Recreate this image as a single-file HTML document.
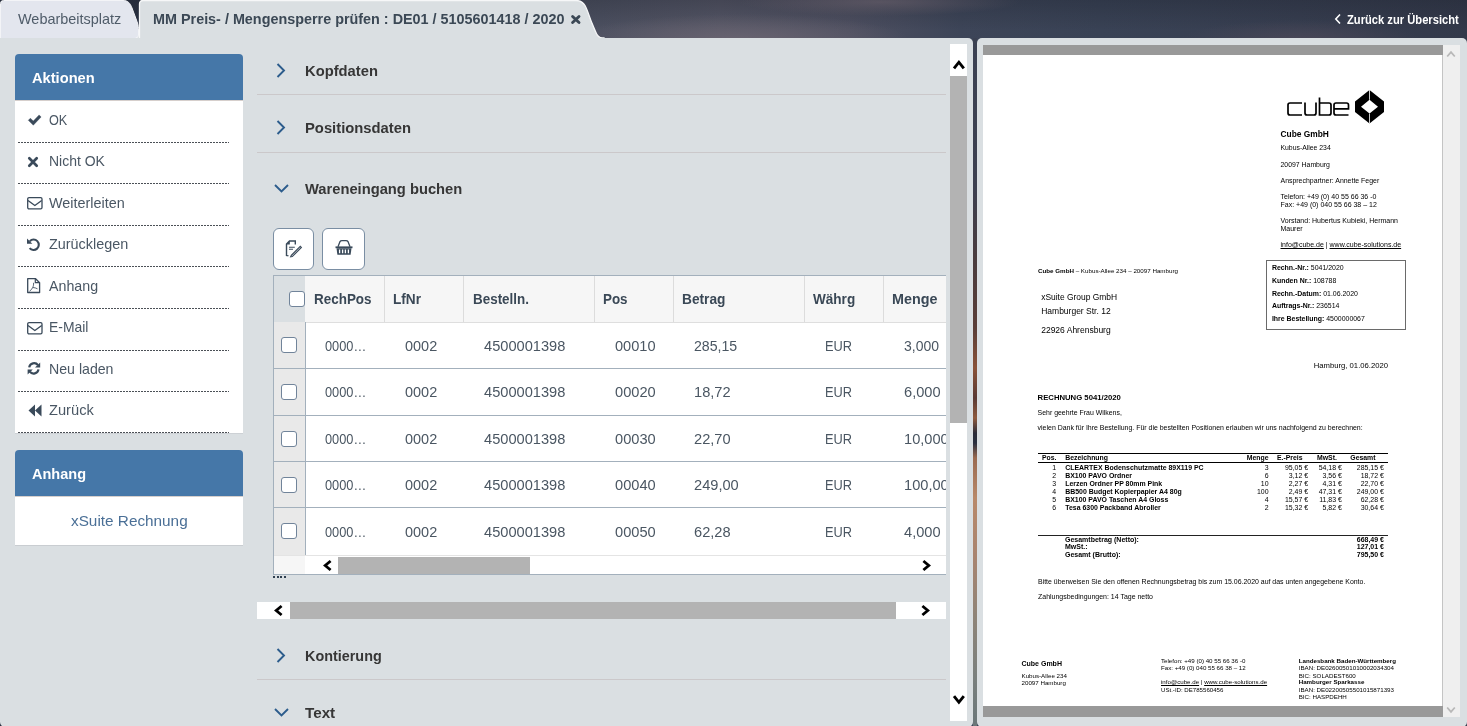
<!DOCTYPE html><html><head><meta charset="utf-8"><title>MM Preis- / Mengensperre prüfen</title><style>
*{box-sizing:border-box;}
html,body{margin:0;padding:0;}
body{width:1467px;height:726px;overflow:hidden;position:relative;font-family:"Liberation Sans",sans-serif;background:#3a4152;}
.t{position:absolute;white-space:nowrap;line-height:1;}
u{text-decoration-thickness:0.6px;text-underline-offset:0.6px;}
.r{position:absolute;}
svg{position:absolute;overflow:visible;}
</style></head><body><div id="wrap" style="position:absolute;left:0;top:0;width:1467px;height:726px;overflow:hidden;will-change:transform;"><div class="r" style="left:0;top:0;width:1467px;height:726px;background:radial-gradient(ellipse 170px 26px at 740px 40px,rgba(108,102,114,0.85) 0%,rgba(108,102,114,0) 100%),radial-gradient(ellipse 140px 14px at 880px 2px,rgba(100,92,104,0.7) 0%,rgba(100,92,104,0) 100%),radial-gradient(ellipse 120px 20px at 1300px 40px,rgba(80,74,90,0.7) 0%,rgba(80,74,90,0) 100%),linear-gradient(180deg,rgba(20,24,34,0.25) 0px,rgba(20,24,34,0) 30px),linear-gradient(90deg,#2a3142 0px,#2a3142 130px,#4c5060 600px,#545565 720px,#4d4f60 850px,#3d4558 960px,#394255 1100px,#373e50 1300px,#33394a 1467px);"></div>
<div class="r" style="left:973px;top:38px;width:4px;height:688px;background:linear-gradient(180deg,#3b4152 0px,#3d4050 150px,#4a3c3e 220px,#5a3e38 290px,#8a5238 330px,#5a3a34 360px,#8e5a3e 380px,#2c2c38 395px,#2a3040 405px,#9a6a50 420px,#b8896a 460px,#a88470 520px,#8e8478 580px,#7a807e 640px,#5f7075 726px);"></div>
<div class="r" style="left:0px;top:34px;width:150px;height:5px;background:#dadfe2;"></div>
<svg style="left:0;top:0" width="620" height="40" viewBox="0 0 620 40"><path d="M0.5,40 V3.5 Q0.5,0.5 3.5,0.5 H123 C128,0.5 130,3 132,8 L137,21.5 C138.3,25 138.5,28 138.5,31 V35 Q138.5,38 135.5,38 V40 Z" fill="#e3e6ee" stroke="#f3f4f7" stroke-width="1"/><path d="M139.5,40 V4 Q139.5,0.5 143,0.5 H576 C580.5,0.5 583,2 585,5.5 C587.5,10 589.5,17 591.5,22 L595.5,31.5 C597,35.5 598.5,38 602.5,38 H604 V40 Z" fill="#dadfe2" stroke="#f6f7f8" stroke-width="1.3"/></svg>
<div class="t " style="left:17.90px;top:11px;font-size:15px;color:#4f5c69;transform-origin:0.00px 0;transform:scaleX(0.9628);">Webarbeitsplatz</div>
<div class="t " style="left:152.90px;top:12px;font-size:14.8px;font-weight:bold;color:#3b4855;transform-origin:0.00px 0;transform:scaleX(0.9716);">MM Preis- / Mengensperre prüfen : DE01 / 5105601418 / 2020</div>
<svg style="left:571.4px;top:14.9px" width="10" height="9" viewBox="0 0 10 9"><path d="M1.6,1.5 L8,7.5 M8,1.5 L1.6,7.5" stroke="#3b4855" stroke-width="2.9" stroke-linecap="round"/></svg>
<svg style="left:1334px;top:13px" width="8" height="12" viewBox="0 0 8 12"><path d="M6,1.5 L1.8,6 L6,10.5" stroke="#ffffff" stroke-width="1.6" fill="none"/></svg>
<div class="t " style="left:1347.40px;top:13px;font-size:13.5px;font-weight:bold;color:#ffffff;transform-origin:0 0;transform:scaleX(0.828);">Zurück zur Übersicht</div>
<div class="r" style="left:0px;top:38px;width:973px;height:689px;background:#dadfe2;border-radius:0 5px 5px 5px;"></div>
<div class="r" style="left:977px;top:38px;width:490px;height:689px;background:#dadfe2;border-radius:5px;"></div>
<div class="r" style="left:15px;top:54px;width:228px;height:46px;background:#4577a8;border-radius:4px 4px 0 0;"></div>
<div class="t " style="left:31.70px;top:70px;font-size:15px;font-weight:bold;color:#ffffff;transform-origin:0.00px 0;transform:scaleX(0.9772);">Aktionen</div>
<div class="r" style="left:15px;top:100px;width:228px;height:333px;background:#ffffff;box-shadow:0 1px 0 #cdd1d5;"></div>
<div class="r" style="left:15px;top:100px;width:228px;height:1px;background:#d6cfcc;"></div>
<div class="t " style="left:49.30px;top:112px;font-size:15px;color:#4a5764;transform-origin:0.00px 0;transform:scaleX(0.8443);">OK</div>
<div class="t " style="left:49.30px;top:153px;font-size:15px;color:#4a5764;transform-origin:0.00px 0;transform:scaleX(0.9317);">Nicht OK</div>
<div class="t " style="left:49.30px;top:195px;font-size:15px;color:#4a5764;transform-origin:0.00px 0;transform:scaleX(0.9603);">Weiterleiten</div>
<div class="t " style="left:49.30px;top:236px;font-size:15px;color:#4a5764;transform-origin:0.00px 0;transform:scaleX(0.9596);">Zurücklegen</div>
<div class="t " style="left:49.30px;top:278px;font-size:15px;color:#4a5764;transform-origin:0.00px 0;transform:scaleX(0.9495);">Anhang</div>
<div class="t " style="left:49.30px;top:319px;font-size:15px;color:#4a5764;transform-origin:0.00px 0;transform:scaleX(0.9273);">E-Mail</div>
<div class="t " style="left:49.30px;top:361px;font-size:15px;color:#4a5764;transform-origin:0.00px 0;transform:scaleX(0.9430);">Neu laden</div>
<div class="t " style="left:49.30px;top:402px;font-size:15px;color:#4a5764;transform-origin:0.00px 0;transform:scaleX(0.9768);">Zurück</div>
<div class="r" style="left:18px;top:142px;width:211px;height:1px;background-image:linear-gradient(90deg,#4b5056 0,#4b5056 2px,transparent 2px);background-size:3px 1px;"></div>
<div class="r" style="left:18px;top:183px;width:211px;height:1px;background-image:linear-gradient(90deg,#4b5056 0,#4b5056 2px,transparent 2px);background-size:3px 1px;"></div>
<div class="r" style="left:18px;top:225px;width:211px;height:1px;background-image:linear-gradient(90deg,#4b5056 0,#4b5056 2px,transparent 2px);background-size:3px 1px;"></div>
<div class="r" style="left:18px;top:266px;width:211px;height:1px;background-image:linear-gradient(90deg,#4b5056 0,#4b5056 2px,transparent 2px);background-size:3px 1px;"></div>
<div class="r" style="left:18px;top:308px;width:211px;height:1px;background-image:linear-gradient(90deg,#4b5056 0,#4b5056 2px,transparent 2px);background-size:3px 1px;"></div>
<div class="r" style="left:18px;top:350px;width:211px;height:1px;background-image:linear-gradient(90deg,#4b5056 0,#4b5056 2px,transparent 2px);background-size:3px 1px;"></div>
<div class="r" style="left:18px;top:391px;width:211px;height:1px;background-image:linear-gradient(90deg,#4b5056 0,#4b5056 2px,transparent 2px);background-size:3px 1px;"></div>
<div class="r" style="left:18px;top:432px;width:211px;height:1px;background-image:linear-gradient(90deg,#4b5056 0,#4b5056 2px,transparent 2px);background-size:3px 1px;"></div>
<svg style="left:28px;top:114px" width="14" height="12" viewBox="0 0 14 12"><path d="M0.3,6.3 L2.4,4.2 L5.3,7.1 L11.1,0.9 L13.1,3 L5.3,11.2 Z" fill="#3a4a5a" stroke="#3a4a5a" stroke-width="0.4" stroke-linejoin="round"/></svg><svg style="left:28.2px;top:157px" width="10" height="10" viewBox="0 0 10 10"><path d="M1.3,1.3 L8.7,8.7 M8.7,1.3 L1.3,8.7" stroke="#3a4a5a" stroke-width="2.7" stroke-linecap="round"/></svg><svg style="left:27px;top:196.6px" width="16" height="13" viewBox="0 0 16 13"><rect x="0.7" y="0.7" width="14.3" height="11.1" rx="1.3" stroke="#3a4a5a" stroke-width="1.3" fill="none"/><path d="M1,3.4 L7.85,8.6 L14.7,3.4" stroke="#3a4a5a" stroke-width="1.3" fill="none" stroke-linejoin="round"/></svg><svg style="left:24px;top:235px" width="20" height="20" viewBox="0 0 20 20"><path d="M5.82,6.16 A5.2,5.2 0 1 1 5.6,13.1" stroke="#3a4a5a" stroke-width="2.1" fill="none"/><path d="M3,3.5 L8.3,8.8 L3,8.8 Z" fill="#3a4a5a"/></svg><svg style="left:27px;top:277.5px" width="14" height="17" viewBox="0 0 14 17"><path d="M0.7,0.7 H8.6 L12.6,4.7 V14.5 H0.7 Z" stroke="#3a4a5a" stroke-width="1.3" fill="none" stroke-linejoin="round"/><path d="M8.3,0.7 V4.7 H12.6" stroke="#3a4a5a" stroke-width="1.2" fill="none"/><path d="M6.5,4.8 C6.8,6.5 6.4,8 5.8,9.3 C5,11 4,12.3 2.5,13.2 M5.8,9.5 C7.5,9.6 9,10 10.5,10.8" stroke="#3a4a5a" stroke-width="1.0" fill="none" opacity="0.85"/></svg><svg style="left:27px;top:321.6px" width="16" height="13" viewBox="0 0 16 13"><rect x="0.7" y="0.7" width="14.3" height="11.1" rx="1.3" stroke="#3a4a5a" stroke-width="1.3" fill="none"/><path d="M1,3.4 L7.85,8.6 L14.7,3.4" stroke="#3a4a5a" stroke-width="1.3" fill="none" stroke-linejoin="round"/></svg><svg style="left:26.5px;top:362px" width="14" height="13" viewBox="0 0 14 13"><path d="M2.2,5.4 A4.9,4.9 0 0 1 11,3.2" stroke="#3a4a5a" stroke-width="2.2" fill="none"/><path d="M13.2,0.4 V5.6 H8 Z" fill="#3a4a5a"/><path d="M11.5,7.4 A4.9,4.9 0 0 1 2.8,9.6" stroke="#3a4a5a" stroke-width="2.2" fill="none"/><path d="M0.6,12.6 V7.4 H5.8 Z" fill="#3a4a5a"/></svg><svg style="left:27.5px;top:404px" width="15" height="13" viewBox="0 0 15 13"><path d="M0.5,6.5 L7,0.5 V12.5 Z M7,6.5 L13.5,0.5 V12.5 Z" fill="#3a4a5a"/></svg>
<div class="r" style="left:15px;top:450px;width:228px;height:46px;background:#4577a8;border-radius:4px 4px 0 0;"></div>
<div class="t " style="left:31.60px;top:466px;font-size:15px;font-weight:bold;color:#ffffff;transform-origin:0.00px 0;transform:scaleX(0.9671);">Anhang</div>
<div class="r" style="left:15px;top:496px;width:228px;height:48.5px;background:#ffffff;box-shadow:0 1px 0 #c9cdd1;"></div>
<div class="r" style="left:15px;top:496px;width:228px;height:1px;background:#d6cfcc;"></div>
<div class="t " style="left:70.80px;top:513px;font-size:15.3px;color:#4a6f96;transform-origin:0.00px 0;transform:scaleX(1.0013);">xSuite Rechnung</div>
<svg style="left:275.5px;top:62.5px" width="10" height="15" viewBox="0 0 10 15"><path d="M1.5,1 L8,7.5 L1.5,14" stroke="#2c5c8c" stroke-width="1.9" fill="none"/></svg>
<div class="t " style="left:305.10px;top:63px;font-size:15px;font-weight:bold;color:#363636;transform-origin:0.00px 0;transform:scaleX(0.9828);">Kopfdaten</div>
<div class="r" style="left:257px;top:94px;width:689px;height:1px;background:#cbc8ca;"></div>
<svg style="left:275.5px;top:119.5px" width="10" height="15" viewBox="0 0 10 15"><path d="M1.5,1 L8,7.5 L1.5,14" stroke="#2c5c8c" stroke-width="1.9" fill="none"/></svg>
<div class="t " style="left:305.00px;top:120px;font-size:15px;font-weight:bold;color:#363636;transform-origin:0.00px 0;transform:scaleX(0.9859);">Positionsdaten</div>
<div class="r" style="left:257px;top:152px;width:689px;height:1px;background:#cbc8ca;"></div>
<svg style="left:273.8px;top:183.5px" width="15" height="9" viewBox="0 0 15 9"><path d="M1,1 L7.5,7.5 L14,1" stroke="#2c5c8c" stroke-width="1.9" fill="none"/></svg>
<div class="t " style="left:305.00px;top:181px;font-size:15px;font-weight:bold;color:#363636;transform-origin:0.00px 0;transform:scaleX(0.9812);">Wareneingang buchen</div>
<svg style="left:275.5px;top:647.5px" width="10" height="15" viewBox="0 0 10 15"><path d="M1.5,1 L8,7.5 L1.5,14" stroke="#2c5c8c" stroke-width="1.9" fill="none"/></svg>
<div class="t " style="left:305.30px;top:648px;font-size:15px;font-weight:bold;color:#363636;transform-origin:0.00px 0;transform:scaleX(0.9589);">Kontierung</div>
<div class="r" style="left:257px;top:679px;width:689px;height:1px;background:#cbc8ca;"></div>
<svg style="left:273.8px;top:707.5px" width="15" height="9" viewBox="0 0 15 9"><path d="M1,1 L7.5,7.5 L14,1" stroke="#2c5c8c" stroke-width="1.9" fill="none"/></svg>
<div class="t " style="left:305.30px;top:705px;font-size:15px;font-weight:bold;color:#363636;transform-origin:0.00px 0;transform:scaleX(1.0156);">Text</div>
<div class="r" style="left:273px;top:228px;width:41px;height:42px;background:#fff;border:1px solid #7a8ea3;border-radius:6px;"></div>
<div class="r" style="left:322px;top:228px;width:43px;height:42px;background:#fff;border:1px solid #7a8ea3;border-radius:6px;"></div>
<svg style="left:285px;top:240px" width="17" height="17" viewBox="0 0 17 17"><path d="M1.5,16 V4 L4.5,1 H10.3 V4.5" stroke="#3a4a5a" stroke-width="1.4" fill="none"/><path d="M1.2,4.6 L4.8,0.8 V4.6 Z" fill="#3a4a5a"/><path d="M1.5,15.7 H3.5" stroke="#3a4a5a" stroke-width="1.2"/><path d="M4,7.3 H9.8 M4,9.3 H8" stroke="#3a4a5a" stroke-width="1.1"/><path d="M6.2,15.5 L15.3,6.3 L16.4,7.4 L7.3,16.6 L5.6,16.9 Z" stroke="#3a4a5a" stroke-width="1.1" fill="none"/></svg>
<svg style="left:334.5px;top:240px" width="18" height="16" viewBox="0 0 18 16"><path d="M3,6.8 L5,1.6 Q5.5,0.7 7,0.7 H11 Q12.5,0.7 13,1.6 L15,6.8" stroke="#3a4a5a" stroke-width="1.3" fill="none"/><path d="M0.5,6.4 H17.5 V8.2 H0.5 Z" fill="#3a4a5a"/><path d="M1.5,8.2 H16.5 L15.6,14.8 H2.4 Z" fill="#3a4a5a"/><path d="M4.6,9.6 V13.2 M7.6,9.6 V13.2 M10.4,9.6 V13.2 M13.4,9.6 V13.2" stroke="#ffffff" stroke-width="1.3"/></svg>
<div class="r" style="left:273px;top:275px;width:673px;height:300px;background:#ffffff;border-left:1px solid #a3b0bc;border-top:1px solid #a3b0bc;border-bottom:1px solid #a3b0bc;"></div>
<div class="r" style="left:274px;top:276px;width:31px;height:46px;background:#dadfe2;"></div>
<div class="r" style="left:305px;top:276px;width:641px;height:46px;background:#f6f6f6;"></div>
<div class="r" style="left:274px;top:322px;width:672px;height:1px;background:#dedede;"></div>
<div class="r" style="left:384px;top:276px;width:1px;height:46px;background:#dcdcdc;"></div>
<div class="r" style="left:463px;top:276px;width:1px;height:46px;background:#dcdcdc;"></div>
<div class="r" style="left:594px;top:276px;width:1px;height:46px;background:#dcdcdc;"></div>
<div class="r" style="left:673px;top:276px;width:1px;height:46px;background:#dcdcdc;"></div>
<div class="r" style="left:804px;top:276px;width:1px;height:46px;background:#dcdcdc;"></div>
<div class="r" style="left:883px;top:276px;width:1px;height:46px;background:#dcdcdc;"></div>
<div class="t " style="left:313.80px;top:292px;font-size:14.2px;font-weight:bold;color:#3a4856;transform-origin:0.00px 0;transform:scaleX(0.9477);">RechPos</div>
<div class="t " style="left:393.00px;top:292px;font-size:14.2px;font-weight:bold;color:#3a4856;transform-origin:0.00px 0;transform:scaleX(0.9595);">LfNr</div>
<div class="t " style="left:472.70px;top:292px;font-size:14.2px;font-weight:bold;color:#3a4856;transform-origin:0.00px 0;transform:scaleX(0.9463);">Bestelln.</div>
<div class="t " style="left:603.00px;top:292px;font-size:14.2px;font-weight:bold;color:#3a4856;transform-origin:0.00px 0;transform:scaleX(0.9441);">Pos</div>
<div class="t " style="left:682.00px;top:292px;font-size:14.2px;font-weight:bold;color:#3a4856;transform-origin:0.00px 0;transform:scaleX(0.9671);">Betrag</div>
<div class="t " style="left:812.80px;top:292px;font-size:14.2px;font-weight:bold;color:#3a4856;transform-origin:0.00px 0;transform:scaleX(0.9556);">Währg</div>
<div class="t " style="left:891.80px;top:292px;font-size:14.2px;font-weight:bold;color:#3a4856;transform-origin:0.00px 0;transform:scaleX(1.0116);">Menge</div>
<div class="r" style="left:289px;top:291px;width:16px;height:16px;background:#fff;border:1px solid #71849a;border-radius:3px;"></div>
<div class="r" style="left:0;top:0;width:946px;height:726px;overflow:hidden;">
<div class="r" style="left:274px;top:322px;width:31px;height:47px;background:#e9e9e9;"></div>
<div class="r" style="left:305px;top:322px;width:1px;height:47px;background:#a3b0bc;"></div>
<div class="r" style="left:274px;top:368px;width:672px;height:1px;background:#a3b0bc;"></div>
<div class="r" style="left:281px;top:336.5px;width:16px;height:16px;background:#fff;border:1px solid #71849a;border-radius:3px;"></div>
<div class="t " style="left:325.30px;top:338px;font-size:15px;color:#4a5662;transform-origin:0.00px 0;transform:scaleX(0.8537);">0000…</div>
<div class="t " style="left:404.80px;top:338px;font-size:15px;color:#4a5662;transform-origin:0.00px 0;transform:scaleX(0.9648);">0002</div>
<div class="t " style="left:483.80px;top:338px;font-size:15px;color:#4a5662;transform-origin:0.00px 0;transform:scaleX(0.9756);">4500001398</div>
<div class="t " style="left:614.80px;top:338px;font-size:15px;color:#4a5662;transform-origin:0.00px 0;transform:scaleX(0.9736);">00010</div>
<div class="t " style="left:693.80px;top:338px;font-size:15px;color:#4a5662;transform-origin:0.00px 0;transform:scaleX(0.9419);">285,15</div>
<div class="t " style="left:824.80px;top:338px;font-size:15px;color:#4a5662;transform-origin:0.00px 0;transform:scaleX(0.8521);">EUR</div>
<div class="t " style="left:903.80px;top:338px;font-size:15px;color:#4a5662;transform-origin:0.00px 0;transform:scaleX(0.9324);">3,000</div>
<div class="r" style="left:274px;top:369px;width:31px;height:47px;background:#e9e9e9;"></div>
<div class="r" style="left:305px;top:369px;width:1px;height:47px;background:#a3b0bc;"></div>
<div class="r" style="left:274px;top:415px;width:672px;height:1px;background:#a3b0bc;"></div>
<div class="r" style="left:281px;top:383.5px;width:16px;height:16px;background:#fff;border:1px solid #71849a;border-radius:3px;"></div>
<div class="t " style="left:325.30px;top:384px;font-size:15px;color:#4a5662;transform-origin:0.00px 0;transform:scaleX(0.8537);">0000…</div>
<div class="t " style="left:404.80px;top:384px;font-size:15px;color:#4a5662;transform-origin:0.00px 0;transform:scaleX(0.9648);">0002</div>
<div class="t " style="left:483.80px;top:384px;font-size:15px;color:#4a5662;transform-origin:0.00px 0;transform:scaleX(0.9756);">4500001398</div>
<div class="t " style="left:614.80px;top:384px;font-size:15px;color:#4a5662;transform-origin:0.00px 0;transform:scaleX(0.9750);">00020</div>
<div class="t " style="left:693.80px;top:384px;font-size:15px;color:#4a5662;transform-origin:0.00px 0;transform:scaleX(0.9750);">18,72</div>
<div class="t " style="left:824.80px;top:384px;font-size:15px;color:#4a5662;transform-origin:0.00px 0;transform:scaleX(0.8521);">EUR</div>
<div class="t " style="left:903.80px;top:384px;font-size:15px;color:#4a5662;transform-origin:0.00px 0;transform:scaleX(0.9750);">6,000</div>
<div class="r" style="left:274px;top:416px;width:31px;height:46px;background:#e9e9e9;"></div>
<div class="r" style="left:305px;top:416px;width:1px;height:46px;background:#a3b0bc;"></div>
<div class="r" style="left:274px;top:461px;width:672px;height:1px;background:#a3b0bc;"></div>
<div class="r" style="left:281px;top:430.5px;width:16px;height:16px;background:#fff;border:1px solid #71849a;border-radius:3px;"></div>
<div class="t " style="left:325.30px;top:431px;font-size:15px;color:#4a5662;transform-origin:0.00px 0;transform:scaleX(0.8537);">0000…</div>
<div class="t " style="left:404.80px;top:431px;font-size:15px;color:#4a5662;transform-origin:0.00px 0;transform:scaleX(0.9648);">0002</div>
<div class="t " style="left:483.80px;top:431px;font-size:15px;color:#4a5662;transform-origin:0.00px 0;transform:scaleX(0.9756);">4500001398</div>
<div class="t " style="left:614.80px;top:431px;font-size:15px;color:#4a5662;transform-origin:0.00px 0;transform:scaleX(0.9750);">00030</div>
<div class="t " style="left:693.80px;top:431px;font-size:15px;color:#4a5662;transform-origin:0.00px 0;transform:scaleX(0.9750);">22,70</div>
<div class="t " style="left:824.80px;top:431px;font-size:15px;color:#4a5662;transform-origin:0.00px 0;transform:scaleX(0.8521);">EUR</div>
<div class="t " style="left:903.80px;top:431px;font-size:15px;color:#4a5662;transform-origin:0.00px 0;transform:scaleX(0.9750);">10,000</div>
<div class="r" style="left:274px;top:462px;width:31px;height:46px;background:#e9e9e9;"></div>
<div class="r" style="left:305px;top:462px;width:1px;height:46px;background:#a3b0bc;"></div>
<div class="r" style="left:274px;top:507px;width:672px;height:1px;background:#a3b0bc;"></div>
<div class="r" style="left:281px;top:476.5px;width:16px;height:16px;background:#fff;border:1px solid #71849a;border-radius:3px;"></div>
<div class="t " style="left:325.30px;top:477px;font-size:15px;color:#4a5662;transform-origin:0.00px 0;transform:scaleX(0.8537);">0000…</div>
<div class="t " style="left:404.80px;top:477px;font-size:15px;color:#4a5662;transform-origin:0.00px 0;transform:scaleX(0.9648);">0002</div>
<div class="t " style="left:483.80px;top:477px;font-size:15px;color:#4a5662;transform-origin:0.00px 0;transform:scaleX(0.9756);">4500001398</div>
<div class="t " style="left:614.80px;top:477px;font-size:15px;color:#4a5662;transform-origin:0.00px 0;transform:scaleX(0.9750);">00040</div>
<div class="t " style="left:693.80px;top:477px;font-size:15px;color:#4a5662;transform-origin:0.00px 0;transform:scaleX(0.9750);">249,00</div>
<div class="t " style="left:824.80px;top:477px;font-size:15px;color:#4a5662;transform-origin:0.00px 0;transform:scaleX(0.8521);">EUR</div>
<div class="t " style="left:903.80px;top:477px;font-size:15px;color:#4a5662;transform-origin:0.00px 0;transform:scaleX(0.9750);">100,000</div>
<div class="r" style="left:274px;top:508px;width:31px;height:48px;background:#e9e9e9;"></div>
<div class="r" style="left:305px;top:508px;width:1px;height:48px;background:#a3b0bc;"></div>
<div class="r" style="left:274px;top:555px;width:672px;height:1px;background:#e4e4e4;"></div>
<div class="r" style="left:281px;top:522.5px;width:16px;height:16px;background:#fff;border:1px solid #71849a;border-radius:3px;"></div>
<div class="t " style="left:325.30px;top:524px;font-size:15px;color:#4a5662;transform-origin:0.00px 0;transform:scaleX(0.8537);">0000…</div>
<div class="t " style="left:404.80px;top:524px;font-size:15px;color:#4a5662;transform-origin:0.00px 0;transform:scaleX(0.9648);">0002</div>
<div class="t " style="left:483.80px;top:524px;font-size:15px;color:#4a5662;transform-origin:0.00px 0;transform:scaleX(0.9756);">4500001398</div>
<div class="t " style="left:614.80px;top:524px;font-size:15px;color:#4a5662;transform-origin:0.00px 0;transform:scaleX(0.9750);">00050</div>
<div class="t " style="left:693.80px;top:524px;font-size:15px;color:#4a5662;transform-origin:0.00px 0;transform:scaleX(0.9750);">62,28</div>
<div class="t " style="left:824.80px;top:524px;font-size:15px;color:#4a5662;transform-origin:0.00px 0;transform:scaleX(0.8521);">EUR</div>
<div class="t " style="left:903.80px;top:524px;font-size:15px;color:#4a5662;transform-origin:0.00px 0;transform:scaleX(0.9750);">4,000</div>
</div>
<div class="r" style="left:274px;top:556px;width:31px;height:18px;background:#f6f6f6;"></div>
<div class="r" style="left:338px;top:557px;width:192px;height:17px;background:#b3b3b3;"></div>
<svg style="left:322.5px;top:560px" width="9" height="11" viewBox="0 0 9 11"><path d="M7.6,1 L2.2,5.5 L7.6,10" stroke="#000" stroke-width="2.8" fill="none" stroke-miterlimit="10"/></svg>
<svg style="left:921.5px;top:560px" width="9" height="11" viewBox="0 0 9 11"><path d="M1.4,1 L6.8,5.5 L1.4,10" stroke="#000" stroke-width="2.8" fill="none" stroke-miterlimit="10"/></svg>
<div class="r" style="left:273.0px;top:576px;width:2px;height:2px;background:#2f3f50;"></div>
<div class="r" style="left:276.5px;top:576px;width:2px;height:2px;background:#2f3f50;"></div>
<div class="r" style="left:280.0px;top:576px;width:2px;height:2px;background:#2f3f50;"></div>
<div class="r" style="left:283.5px;top:576px;width:2px;height:2px;background:#2f3f50;"></div>
<div class="r" style="left:257px;top:602px;width:689px;height:17px;background:#ffffff;"></div>
<div class="r" style="left:290px;top:602px;width:606px;height:17px;background:#b3b3b3;"></div>
<svg style="left:274px;top:605px" width="9" height="11" viewBox="0 0 9 11"><path d="M7.6,1 L2.2,5.5 L7.6,10" stroke="#000" stroke-width="2.8" fill="none" stroke-miterlimit="10"/></svg>
<svg style="left:920.6px;top:605px" width="9" height="11" viewBox="0 0 9 11"><path d="M1.4,1 L6.8,5.5 L1.4,10" stroke="#000" stroke-width="2.8" fill="none" stroke-miterlimit="10"/></svg>
<div class="r" style="left:950px;top:44px;width:17px;height:677px;background:#ffffff;"></div>
<div class="r" style="left:950px;top:76px;width:17px;height:346.5px;background:#b3b3b3;"></div>
<svg style="left:952.9px;top:59.8px" width="12" height="9.5" viewBox="0 0 12 9.5"><path d="M1,8.3 L5.9,2.2 L10.8,8.3" stroke="#000" stroke-width="2.9" fill="none" stroke-miterlimit="10"/></svg>
<svg style="left:952.9px;top:694.8px" width="12" height="9.5" viewBox="0 0 12 9.5"><path d="M1,1.2 L5.9,7.3 L10.8,1.2" stroke="#000" stroke-width="2.9" fill="none" stroke-miterlimit="10"/></svg>
<div class="r" style="left:983px;top:45px;width:460px;height:10px;background:#999999;"></div>
<div class="r" style="left:983px;top:55px;width:460px;height:651px;background:#ffffff;"></div>
<div class="r" style="left:983px;top:706px;width:460px;height:11px;background:#999999;"></div>
<div class="r" style="left:1442px;top:55px;width:1px;height:651px;background:#c4c4c4;"></div>
<div class="r" style="left:1443px;top:45px;width:17px;height:672px;background:#efefef;"></div>
<svg style="left:1446px;top:50px" width="10" height="8" viewBox="0 0 10 8"><path d="M1.2,6.5 L5,2.2 L8.8,6.5" stroke="#b8b8b8" stroke-width="1.8" fill="none"/></svg>
<svg style="left:1446px;top:706px" width="10" height="8" viewBox="0 0 10 8"><path d="M1.2,1.5 L5,5.8 L8.8,1.5" stroke="#b8b8b8" stroke-width="1.8" fill="none"/></svg>
<svg style="left:1286px;top:89px" width="100" height="36" viewBox="1286 89 100 36"><g fill="none" stroke="#000" stroke-width="1.7"><path d="M1302,103 H1290 Q1288,103 1288,105 V113 Q1288,115 1290,115 H1302"/><path d="M1305,102.5 V113 Q1305,115 1307,115 H1314 Q1316,115 1316,113 V102.5"/><path d="M1319.5,97.5 V115 H1329 Q1331,115 1331,113 V105 Q1331,103 1329,103 H1319.5"/><path d="M1348.5,115 H1336 Q1334,115 1334,113 V105 Q1334,103 1336,103 H1346.5 Q1348.5,103 1348.5,105 V108.8 H1334"/></g><path fill-rule="evenodd" fill="#000" d="M1369.5,90 L1384,101.5 V112 L1369.5,123.5 L1355,112 V101.5 Z M1369.5,99.8 L1361,106.8 L1369.5,113.6 L1378,106.8 Z"/><path d="M1369.5,90 V99.8 M1369.5,113.6 V123.5" stroke="#fff" stroke-width="0.8"/></svg>
<div class="t " style="left:1280.50px;top:130px;font-size:8.4px;font-weight:bold;color:#000000;">Cube GmbH</div>
<div class="t " style="left:1280.50px;top:145px;font-size:6.85px;color:#000000;">Kubus-Allee 234</div>
<div class="t " style="left:1280.50px;top:162px;font-size:6.9px;color:#000000;">20097 Hamburg</div>
<div class="t " style="left:1280.50px;top:178px;font-size:6.95px;color:#000000;">Ansprechpartner: Annette Feger</div>
<div class="t " style="left:1280.50px;top:193px;font-size:7.0px;color:#000000;">Telefon: +49 (0) 40 55 66 36 -0</div>
<div class="t " style="left:1280.50px;top:201px;font-size:7.0px;color:#000000;">Fax: +49 (0) 040 55 66 38 – 12</div>
<div class="t " style="left:1280.50px;top:217px;font-size:7.0px;color:#000000;">Vorstand: Hubertus Kubieki, Hermann</div>
<div class="t " style="left:1280.50px;top:225px;font-size:7.0px;color:#000000;">Maurer</div>
<div class="t " style="left:1280.50px;top:241px;font-size:7.0px;color:#000000;"><u>info@cube.de</u> | <u>www.cube-solutions.de</u></div>
<div class="t " style="left:1038.00px;top:268px;font-size:6.22px;color:#000000;"><b>Cube GmbH</b> – Kubus-Allee 234 – 20097 Hamburg</div>
<div class="t " style="left:1041.20px;top:293px;font-size:8.45px;color:#000000;">xSuite Group GmbH</div>
<div class="t " style="left:1041.20px;top:307px;font-size:8.5px;color:#000000;">Hamburger Str. 12</div>
<div class="t " style="left:1041.20px;top:326px;font-size:8.5px;color:#000000;">22926 Ahrensburg</div>
<div class="r" style="left:1266px;top:260px;width:139.5px;height:70px;border:1px solid #6a6a6a;"></div>
<div class="t " style="left:1271.90px;top:265px;font-size:6.95px;color:#000000;"><b>Rechn.-Nr.:</b> 5041/2020</div>
<div class="t " style="left:1271.90px;top:278px;font-size:6.95px;color:#000000;"><b>Kunden Nr.:</b> 108788</div>
<div class="t " style="left:1271.90px;top:291px;font-size:6.95px;color:#000000;"><b>Rechn.-Datum:</b> 01.06.2020</div>
<div class="t " style="left:1271.90px;top:303px;font-size:6.95px;color:#000000;"><b>Auftrags-Nr.:</b> 236514</div>
<div class="t " style="left:1271.90px;top:316px;font-size:6.95px;color:#000000;"><b>Ihre Bestellung:</b> 4500000067</div>
<div class="t " style="left:1313.70px;top:362px;font-size:7.7px;color:#000000;">Hamburg, 01.06.2020</div>
<div class="t " style="left:1037.60px;top:394px;font-size:7.72px;font-weight:bold;color:#000000;">RECHNUNG 5041/2020</div>
<div class="t " style="left:1037.60px;top:410px;font-size:6.93px;color:#000000;">Sehr geehrte Frau Wilkens,</div>
<div class="t " style="left:1037.60px;top:425px;font-size:6.96px;color:#000000;">vielen Dank für Ihre Bestellung. Für die bestellten Positionen erlauben wir uns nachfolgend zu berechnen:</div>
<div class="r" style="left:1037.5px;top:453px;width:350px;height:1.3px;background:#000;"></div>
<div class="r" style="left:1037.5px;top:462px;width:350px;height:1.1px;background:#000;"></div>
<div class="t " style="left:1042.00px;top:455px;font-size:6.8px;font-weight:bold;color:#000000;">Pos.</div>
<div class="t " style="left:1065.20px;top:455px;font-size:6.88px;font-weight:bold;color:#000000;">Bezeichnung</div>
<div class="t" style="left:968.50px;top:455px;width:300px;text-align:right;font-size:6.88px;color:#000000;font-weight:bold;">Menge</div>
<div class="t " style="left:1277.00px;top:455px;font-size:6.88px;font-weight:bold;color:#000000;">E.-Preis</div>
<div class="t " style="left:1317.00px;top:455px;font-size:6.88px;font-weight:bold;color:#000000;">MwSt.</div>
<div class="t " style="left:1350.30px;top:455px;font-size:6.88px;font-weight:bold;color:#000000;">Gesamt</div>
<div class="t" style="left:756.20px;top:465px;width:300px;text-align:right;font-size:6.95px;color:#000000;">1</div>
<div class="t " style="left:1065.20px;top:465px;font-size:6.95px;font-weight:bold;color:#000000;">CLEARTEX Bodenschutzmatte 89X119 PC</div>
<div class="t" style="left:968.50px;top:465px;width:300px;text-align:right;font-size:6.95px;color:#000000;">3</div>
<div class="t" style="left:1008.10px;top:465px;width:300px;text-align:right;font-size:6.95px;color:#000000;">95,05 €</div>
<div class="t" style="left:1041.80px;top:465px;width:300px;text-align:right;font-size:6.95px;color:#000000;">54,18 €</div>
<div class="t" style="left:1083.80px;top:465px;width:300px;text-align:right;font-size:6.95px;color:#000000;">285,15 €</div>
<div class="t" style="left:756.20px;top:473px;width:300px;text-align:right;font-size:6.95px;color:#000000;">2</div>
<div class="t " style="left:1065.20px;top:473px;font-size:6.95px;font-weight:bold;color:#000000;">BX100 PAVO Ordner</div>
<div class="t" style="left:968.50px;top:473px;width:300px;text-align:right;font-size:6.95px;color:#000000;">6</div>
<div class="t" style="left:1008.10px;top:473px;width:300px;text-align:right;font-size:6.95px;color:#000000;">3,12 €</div>
<div class="t" style="left:1041.80px;top:473px;width:300px;text-align:right;font-size:6.95px;color:#000000;">3,56 €</div>
<div class="t" style="left:1083.80px;top:473px;width:300px;text-align:right;font-size:6.95px;color:#000000;">18,72 €</div>
<div class="t" style="left:756.20px;top:481px;width:300px;text-align:right;font-size:6.95px;color:#000000;">3</div>
<div class="t " style="left:1065.20px;top:481px;font-size:6.95px;font-weight:bold;color:#000000;">Lerzen Ordner PP 80mm Pink</div>
<div class="t" style="left:968.50px;top:481px;width:300px;text-align:right;font-size:6.95px;color:#000000;">10</div>
<div class="t" style="left:1008.10px;top:481px;width:300px;text-align:right;font-size:6.95px;color:#000000;">2,27 €</div>
<div class="t" style="left:1041.80px;top:481px;width:300px;text-align:right;font-size:6.95px;color:#000000;">4,31 €</div>
<div class="t" style="left:1083.80px;top:481px;width:300px;text-align:right;font-size:6.95px;color:#000000;">22,70 €</div>
<div class="t" style="left:756.20px;top:489px;width:300px;text-align:right;font-size:6.95px;color:#000000;">4</div>
<div class="t " style="left:1065.20px;top:489px;font-size:6.95px;font-weight:bold;color:#000000;">BB500 Budget Kopierpapier A4 80g</div>
<div class="t" style="left:968.50px;top:489px;width:300px;text-align:right;font-size:6.95px;color:#000000;">100</div>
<div class="t" style="left:1008.10px;top:489px;width:300px;text-align:right;font-size:6.95px;color:#000000;">2,49 €</div>
<div class="t" style="left:1041.80px;top:489px;width:300px;text-align:right;font-size:6.95px;color:#000000;">47,31 €</div>
<div class="t" style="left:1083.80px;top:489px;width:300px;text-align:right;font-size:6.95px;color:#000000;">249,00 €</div>
<div class="t" style="left:756.20px;top:497px;width:300px;text-align:right;font-size:6.95px;color:#000000;">5</div>
<div class="t " style="left:1065.20px;top:497px;font-size:6.95px;font-weight:bold;color:#000000;">BX100 PAVO Taschen A4 Gloss</div>
<div class="t" style="left:968.50px;top:497px;width:300px;text-align:right;font-size:6.95px;color:#000000;">4</div>
<div class="t" style="left:1008.10px;top:497px;width:300px;text-align:right;font-size:6.95px;color:#000000;">15,57 €</div>
<div class="t" style="left:1041.80px;top:497px;width:300px;text-align:right;font-size:6.95px;color:#000000;">11,83 €</div>
<div class="t" style="left:1083.80px;top:497px;width:300px;text-align:right;font-size:6.95px;color:#000000;">62,28 €</div>
<div class="t" style="left:756.20px;top:505px;width:300px;text-align:right;font-size:6.95px;color:#000000;">6</div>
<div class="t " style="left:1065.20px;top:505px;font-size:6.95px;font-weight:bold;color:#000000;">Tesa 6300 Packband Abroller</div>
<div class="t" style="left:968.50px;top:505px;width:300px;text-align:right;font-size:6.95px;color:#000000;">2</div>
<div class="t" style="left:1008.10px;top:505px;width:300px;text-align:right;font-size:6.95px;color:#000000;">15,32 €</div>
<div class="t" style="left:1041.80px;top:505px;width:300px;text-align:right;font-size:6.95px;color:#000000;">5,82 €</div>
<div class="t" style="left:1083.80px;top:505px;width:300px;text-align:right;font-size:6.95px;color:#000000;">30,64 €</div>
<div class="r" style="left:1037.5px;top:535px;width:350px;height:1px;background:#222;"></div>
<div class="t " style="left:1065.00px;top:536px;font-size:7.0px;font-weight:bold;color:#000000;">Gesamtbetrag (Netto):</div>
<div class="t " style="left:1065.00px;top:543px;font-size:7.0px;font-weight:bold;color:#000000;">MwSt.:</div>
<div class="t " style="left:1065.00px;top:551px;font-size:7.0px;font-weight:bold;color:#000000;">Gesamt (Brutto):</div>
<div class="t" style="left:1084.00px;top:536px;width:300px;text-align:right;font-size:7.0px;color:#000000;font-weight:bold;">668,49 €</div>
<div class="t" style="left:1084.00px;top:543px;width:300px;text-align:right;font-size:7.0px;color:#000000;font-weight:bold;">127,01 €</div>
<div class="t" style="left:1084.00px;top:551px;width:300px;text-align:right;font-size:7.0px;color:#000000;font-weight:bold;">795,50 €</div>
<div class="t " style="left:1038.00px;top:579px;font-size:6.95px;color:#000000;">Bitte überweisen Sie den offenen Rechnungsbetrag bis zum 15.06.2020 auf das unten angegebene Konto.</div>
<div class="t " style="left:1038.00px;top:594px;font-size:6.97px;color:#000000;">Zahlungsbedingungen: 14 Tage netto</div>
<div class="t " style="left:1021.50px;top:660px;font-size:7.0px;font-weight:bold;color:#000000;">Cube GmbH</div>
<div class="t " style="left:1021.50px;top:673px;font-size:6.2px;color:#000000;">Kubus-Allee 234</div>
<div class="t " style="left:1021.50px;top:680px;font-size:6.2px;color:#000000;">20097 Hamburg</div>
<div class="t " style="left:1161.00px;top:658px;font-size:6.17px;color:#000000;">Telefon: +49 (0) 40 55 66 36 -0</div>
<div class="t " style="left:1161.00px;top:665px;font-size:6.17px;color:#000000;">Fax: +49 (0) 040 55 66 38 – 12</div>
<div class="t " style="left:1161.00px;top:679px;font-size:6.16px;color:#000000;"><u>info@cube.de</u> | <u>www.cube-solutions.de</u></div>
<div class="t " style="left:1161.00px;top:687px;font-size:6.1px;color:#000000;">USt.-ID: DE785560456</div>
<div class="t " style="left:1298.70px;top:658px;font-size:6.19px;font-weight:bold;color:#000000;">Landesbank Baden-Württemberg</div>
<div class="t " style="left:1298.70px;top:665px;font-size:6.2px;color:#000000;">IBAN: DE02600501010002034304</div>
<div class="t " style="left:1298.70px;top:673px;font-size:6.2px;color:#000000;">BIC: SOLADEST600</div>
<div class="t " style="left:1298.70px;top:679px;font-size:6.2px;font-weight:bold;color:#000000;">Hamburger Sparkasse</div>
<div class="t " style="left:1298.70px;top:687px;font-size:6.2px;color:#000000;">IBAN: DE02200505501015871393</div>
<div class="t " style="left:1298.70px;top:694px;font-size:6.2px;color:#000000;">BIC: HASPDEHH</div></div></body></html>
